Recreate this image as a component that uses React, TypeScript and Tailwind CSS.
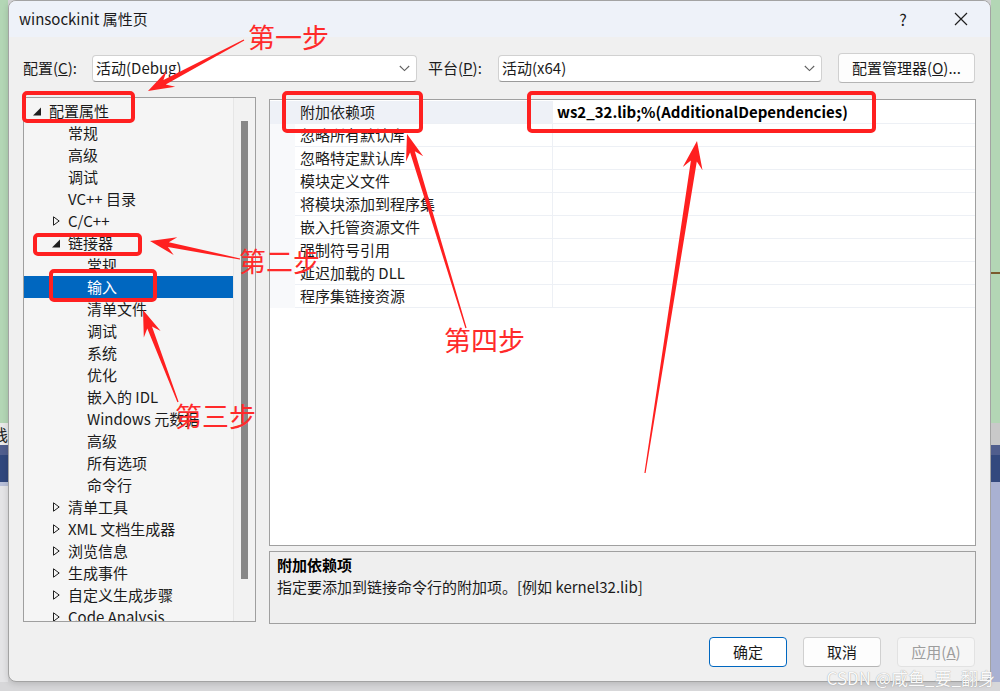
import React from "react";

type Pt = [number, number];

// tapered arrow polygon, tail -> tip
const arrow = (tail: Pt, tip: Pt, head = 24, headW = 18, shaft = 5) => {
  const dx = tip[0] - tail[0];
  const dy = tip[1] - tail[1];
  const len = Math.hypot(dx, dy);
  const ux = dx / len;
  const uy = dy / len;
  const nx = -uy;
  const ny = ux;
  const b: Pt = [tip[0] - ux * head, tip[1] - uy * head];
  const neck: Pt = [tip[0] - ux * head * 0.72, tip[1] - uy * head * 0.72];
  const p = (q: Pt, s: number) => `${(q[0] + nx * s).toFixed(1)},${(q[1] + ny * s).toFixed(1)}`;
  return [p(tail, 0.6), p(neck, shaft / 2), p(b, headW / 2), p(tip, 0), p(b, -headW / 2), p(neck, -shaft / 2), p(tail, -0.6)].join(" ");
};

const tree = [
  { t: "配置属性", l: 0, s: "open" },
  { t: "常规", l: 1 },
  { t: "高级", l: 1 },
  { t: "调试", l: 1 },
  { t: "VC++ 目录", l: 1 },
  { t: "C/C++", l: 1, s: "closed" },
  { t: "链接器", l: 1, s: "open" },
  { t: "常规", l: 2 },
  { t: "输入", l: 2, sel: true },
  { t: "清单文件", l: 2 },
  { t: "调试", l: 2 },
  { t: "系统", l: 2 },
  { t: "优化", l: 2 },
  { t: "嵌入的 IDL", l: 2 },
  { t: "Windows 元数据", l: 2 },
  { t: "高级", l: 2 },
  { t: "所有选项", l: 2 },
  { t: "命令行", l: 2 },
  { t: "清单工具", l: 1, s: "closed" },
  { t: "XML 文档生成器", l: 1, s: "closed" },
  { t: "浏览信息", l: 1, s: "closed" },
  { t: "生成事件", l: 1, s: "closed" },
  { t: "自定义生成步骤", l: 1, s: "closed" },
  { t: "Code Analysis", l: 1, s: "closed" },
];

const indent = ["pl-[9px]", "pl-[28px]", "pl-[47px]"];

const props = [
  "附加依赖项",
  "忽略所有默认库",
  "忽略特定默认库",
  "模块定义文件",
  "将模块添加到程序集",
  "嵌入托管资源文件",
  "强制符号引用",
  "延迟加载的 DLL",
  "程序集链接资源",
];

const Chevron = () => (
  <svg width="11" height="7" viewBox="0 0 11 7" className="shrink-0">
    <path d="M0.8 1 L5.5 5.6 L10.2 1" fill="none" stroke="#5f5f5f" strokeWidth="1.1" />
  </svg>
);

const Combo = ({ text, w }: { text: string; w: string }) => (
  <div className={`${w} h-[27px] flex items-center justify-between bg-white border border-[#d1d1d1] border-b-[#9a9a9a] rounded-[4px] pl-[3px] pr-[6px]`}>
    <span>{text}</span>
    <Chevron />
  </div>
);

const Toggle = ({ s }: { s?: string }) =>
  s === "open" ? (
    <svg width="9" height="9" viewBox="0 0 9 9">
      <polygon points="8,0.5 8,8.5 0,8.5" fill="#1f1f1f" />
    </svg>
  ) : s === "closed" ? (
    <svg width="9" height="10" viewBox="0 0 9 10">
      <polygon points="1.5,0.8 7.2,5 1.5,9.2" fill="none" stroke="#1f1f1f" strokeWidth="1" />
    </svg>
  ) : null;

export default function App() {
  return (
    <div className="relative w-[1000px] h-[691px] overflow-hidden bg-[#d7d7d9] flex items-start font-['Noto_Sans_CJK_SC',sans-serif] text-[15px] text-[#1b1b1b]">
      {/* background strip left */}
      <div className="w-[8px] h-[682px] flex flex-col shrink-0">
        <div className="h-[423px] bg-[#b3d6b5]" />
        <div className="h-[22px] bg-[#e9e9e9] flex justify-end overflow-hidden leading-[22px] text-[16px] text-[#222]">
          <span className="shrink-0">栈</span>
        </div>
        <div className="h-[10px] bg-[#505e8d]" />
        <div className="h-[27px] bg-[#30477c]" />
        <div className="h-[4px] bg-[#b8bfd8]" />
        <div className="flex-1 bg-[#e4e4e6]" />
      </div>

      {/* dialog */}
      <div className="w-[983px] h-[682px] shrink-0 rounded-[8px] border border-[#a3a3a3] bg-[#f0f0f0] overflow-hidden flex flex-col shadow-[0_2px_6px_rgba(0,0,0,0.15)]">
        <div className="h-[36px] bg-[#eef2f9] flex items-center pl-[10px]">
          <span>winsockinit 属性页</span>
          <div className="ml-auto flex h-full">
            <div className="w-[58px] flex items-center justify-center text-[16px]">?</div>
            <div className="w-[58px] flex items-center justify-center">
              <svg width="14" height="14" viewBox="0 0 14 14">
                <path d="M1 1 L13 13 M13 1 L1 13" stroke="#1f1f1f" strokeWidth="1.2" />
              </svg>
            </div>
          </div>
        </div>

        <div className="px-[14px] flex flex-col">
          {/* config row */}
          <div className="mt-[16px] h-[30px] flex items-center">
            <span className="w-[69px]">
              配置(<span className="underline">C</span>):
            </span>
            <Combo text="活动(Debug)" w="w-[325px]" />
            <span className="ml-[11px] w-[70px]">
              平台(<span className="underline">P</span>):
            </span>
            <Combo text="活动(x64)" w="w-[324px]" />
            <div className="ml-[16px] w-[137px] h-[30px] flex items-center justify-center bg-[#fdfdfd] border border-[#d0d0d0] border-b-[#b5b5b5] rounded-[4px]">
              配置管理器(<span className="underline">O</span>)...
            </div>
          </div>

          {/* main area */}
          <div className="mt-[14px] flex gap-[13px]">
            <div className="w-[233px] h-[525px] border border-[#9f9f9f] bg-[#f5f5f5] flex overflow-hidden">
              <div className="flex-1 pt-[2px] overflow-hidden">
                {tree.map((it, i) => (
                  <div
                    key={i}
                    className={`h-[22px] flex items-center whitespace-nowrap ${indent[it.l]} ${it.sel ? "bg-[#0067c0] text-white" : ""}`}
                  >
                    <div className="w-[16px] flex items-center">
                      <Toggle s={it.s} />
                    </div>
                    <span>{it.t}</span>
                  </div>
                ))}
              </div>
              <div className="w-[22px] bg-[#f2f2f2] border-l border-[#e6e6e6] flex justify-center pt-[23px]">
                <div className="w-[7px] h-[458px] bg-[#878787]" />
              </div>
            </div>

            <div className="w-[707px] pt-[2px] flex flex-col gap-[5px]">
              <div className="h-[447px] border border-[#a0a0a0] bg-white flex flex-col pt-[1px]">
                {props.map((p, i) => (
                  <div key={i} className="h-[23px] flex">
                    <div className={`w-[25px] ${i === 0 ? "bg-[#eef1f7]" : "bg-[#f8f9fb]"}`} />
                    <div
                      className={`w-[258px] pl-[5px] flex items-center border-b border-r border-[#edf0f5] whitespace-nowrap ${i === 0 ? "bg-[#eef1f7]" : ""}`}
                    >
                      {p}
                    </div>
                    <div className="flex-1 pl-[4px] flex items-center border-b border-[#edf0f5] font-bold text-black">
                      {i === 0 ? "ws2_32.lib;%(AdditionalDependencies)" : ""}
                    </div>
                  </div>
                ))}
              </div>
              <div className="h-[73px] border border-[#a0a0a0] bg-[#efefef] pl-[7px] pt-[3px]">
                <div className="leading-[20px] font-bold text-black">附加依赖项</div>
                <div className="leading-[20px] mt-[2px]">指定要添加到链接命令行的附加项。[例如 kernel32.lib]</div>
              </div>
            </div>
          </div>

          {/* buttons */}
          <div className="mt-[13px] pr-[1px] flex justify-end gap-[16px]">
            <div className="w-[78px] h-[30px] flex items-center justify-center bg-white border border-[#0067c0] rounded-[4px]">确定</div>
            <div className="w-[78px] h-[30px] flex items-center justify-center bg-[#fdfdfd] border border-[#d0d0d0] border-b-[#b5b5b5] rounded-[4px]">取消</div>
            <div className="w-[78px] h-[30px] flex items-center justify-center bg-[#f6f6f6] border border-[#e2e2e2] rounded-[4px] text-[#9d9d9d]">
              应用(<span className="underline">A</span>)
            </div>
          </div>
        </div>
      </div>

      {/* background strip right */}
      <div className="w-[9px] h-[682px] flex flex-col shrink-0">
        <div className="h-[272px] bg-[#b3d6b5]" />
        <div className="h-[2px] bg-[#7b5a2e]" />
        <div className="h-[149px] bg-[#b3d6b5]" />
        <div className="h-[22px] bg-[#c9c9c9]" />
        <div className="h-[10px] bg-[#505e8d]" />
        <div className="h-[27px] bg-[#33497e]" />
        <div className="flex-1 bg-[#a9b1d2]" />
      </div>

      {/* annotations */}
      <svg className="absolute inset-0 pointer-events-none" width="1000" height="691" viewBox="0 0 1000 691">
        <g fill="none" stroke="#ff2020" strokeWidth="4">
          <rect x="24" y="93" width="109" height="28" rx="3" />
          <rect x="35" y="235" width="105" height="19" rx="3" />
          <rect x="51" y="271" width="104" height="29" rx="3" />
          <rect x="284" y="93" width="137" height="38" rx="3" />
          <rect x="529" y="93" width="345" height="38" rx="3" />
        </g>
        <g fill="#ff2020">
          <polygon points={arrow([244, 40], [148, 91], 26, 18, 5)} />
          <polygon points={arrow([240, 259], [150, 241], 26, 18, 5)} />
          <polygon points={arrow([178, 402], [143, 310], 26, 18, 5)} />
          <polygon points={arrow([466, 328], [407, 134], 26, 18, 5)} />
          <polygon points={arrow([645, 473], [697, 141], 28, 20, 6)} />
        </g>
      </svg>
      <span className="absolute left-[248px] top-[23px] leading-[27px] text-[27px] text-[#ff2a2a]">第一步</span>
      <span className="absolute left-[239px] top-[247px] leading-[27px] text-[27px] text-[#ff2a2a]">第二步</span>
      <span className="absolute left-[175px] top-[402px] leading-[27px] text-[27px] text-[#ff2a2a]">第三步</span>
      <span className="absolute left-[444px] top-[326px] leading-[27px] text-[27px] text-[#ff2a2a]">第四步</span>

      <span className="absolute right-[5px] bottom-[3px] text-[17px] leading-[20px] text-[#fafafa] [text-shadow:0_0_1px_#8a8a8a]">
        CSDN @咸鱼_要_翻身
      </span>
    </div>
  );
}
